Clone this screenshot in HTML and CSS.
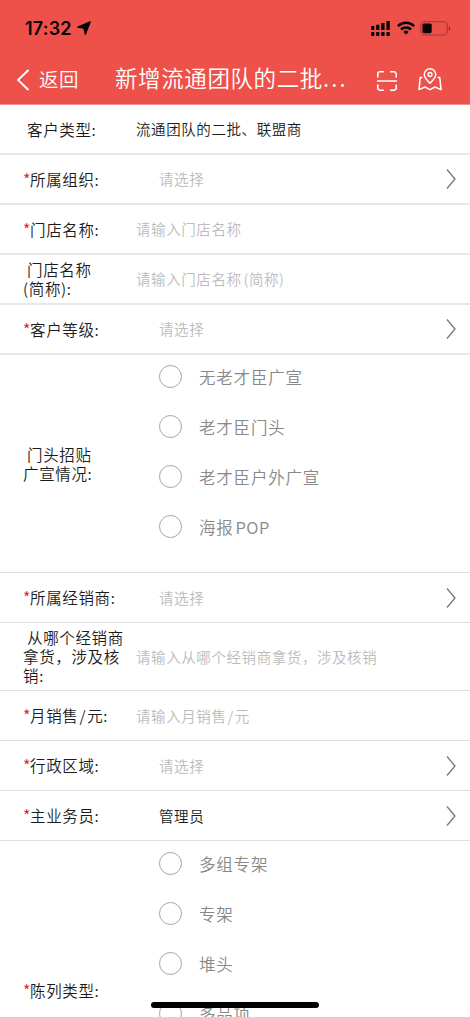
FILE: index.html
```html
<!DOCTYPE html>
<html lang="zh-CN">
<head>
<meta charset="utf-8">
<title>新增客户</title>
<link rel="stylesheet" href="styles.css">
</head>
<body>
<div class="screen">
<header class="header">
  <div class="status">
    <span class="time">17:32</span>
    <svg class="loc" width="14" height="14" viewBox="0 0 14 14"><path d="M13.2.8 8.400 13.300 7 7.200.8 6.100Z" fill="#080506" stroke="#080506" stroke-width="1.300" stroke-linejoin="round"/></svg>
    <svg class="signal" width="19" height="15" viewBox="0 0 19 15" fill="#080506"><rect x="0" y="5" width="3.4" height="4" rx=".6"/><rect x="5" y="3.8" width="3.4" height="5.2" rx=".6"/><rect x="10.2" y="2" width="3.4" height="7" rx=".6"/><rect x="15.4" y="0" width="3.4" height="9" rx=".6"/><rect x="0" y="11" width="3.4" height="4" rx=".8"/><rect x="5" y="11" width="3.4" height="4" rx=".8"/><rect x="10.2" y="11" width="3.4" height="4" rx=".8"/><rect x="15.4" y="11" width="3.4" height="4" rx=".8"/></svg>
    <svg class="wifi" width="18" height="14" viewBox="0 0 18 14" fill="none" stroke="#080506" stroke-width="2.5"><path d="M.9 5.2a11.5 11.5 0 0 1 16.2 0"/><path d="M4 8.5a7.1 7.1 0 0 1 10 0"/><path d="M6.3 10.9a3.9 3.9 0 0 1 5.4 0L9 13.6Z" fill="#080506" stroke="none"/></svg>
    <svg class="battery" width="31" height="15" viewBox="0 0 31 15"><rect x=".8" y=".8" width="26.5" height="13.2" rx="3.6" fill="none" stroke="#a3393a" stroke-width="1.1"/><rect x="2.5" y="2.6" width="9.2" height="9.6" rx="1.6" fill="#080506"/><path d="M28.8 5v5q1.6-.8 1.6-2.5T28.8 5Z" fill="#8c3031"/></svg>
  </div>
  <div class="nav">
    <svg class="back" width="14" height="22" viewBox="0 0 14 22" fill="none" stroke="#fff" stroke-width="1.8"><path d="M12.5 1 2 11l10.500 10"/></svg>
    <span class="back-text">返回</span>
    <h1 class="title">新增流通团队的二批<span class="dots">...</span></h1>
    <svg class="scan" width="20" height="20" viewBox="0 0 20 20" fill="none" stroke="#fff" stroke-width="1.6"><path d="M.8 6.500V3A2.200 2.200 0 0 1 3 .8h4M13 .8h4A2.200 2.200 0 0 1 19.200 3v3.500M.8 13.500V17A2.200 2.200 0 0 0 3 19.200h4M13 19.200h4A2.200 2.200 0 0 0 19.200 17v-3.500M0 10h20"/></svg>
    <svg class="map" width="24" height="23" viewBox="0 0 24 23" fill="none" stroke="#fff" stroke-width="1.5" stroke-linejoin="round"><path d="M12 15.300C8.800 11.900 6.300 9.600 6.300 6.400a5.700 5.600 0 0 1 11.400 0c0 3.200-2.500 5.500-5.700 8.900Z"/><circle cx="12" cy="6.500" r="1.900"/><path d="M4.500 9.600H2.200L1 21.600l6-2.600 5 2.600 5-2.600 6 2.600-1.200-12h-2.300"/></svg>
  </div>
</header>
<main class="form">
  <div class="row"><div class="label"><i class="gap"></i>客户类型:</div><div class="value">流通团队的二批、联盟商</div></div>
  <div class="row"><div class="label"><b class="star">*</b>所属组织:</div><div class="value pick hint">请选择</div><svg class="chev" width="10" height="20" viewBox="0 0 10 20"><path d="M1 .5 9 10 1 19.500"/></svg></div>
  <div class="row"><div class="label"><b class="star">*</b>门店名称:</div><div class="value hint">请输入门店名称</div></div>
  <div class="row"><div class="label"><i class="gap"></i>门店名称<br>(简称):</div><div class="value hint">请输入门店名称<span class="paren">(简称)</span></div></div>
  <div class="row"><div class="label"><b class="star">*</b>客户等级:</div><div class="value pick hint">请选择</div><svg class="chev" width="10" height="20" viewBox="0 0 10 20"><path d="M1 .5 9 10 1 19.500"/></svg></div>
  <div class="row thin group">
    <div class="label"><i class="gap"></i>门头招贴<br>广宣情况:</div>
    <div class="options">
      <div class="option"><span class="radio"></span><span class="choice">无老才臣广宣</span></div>
      <div class="option"><span class="radio"></span><span class="choice">老才臣门头</span></div>
      <div class="option"><span class="radio"></span><span class="choice">老才臣户外广宣</span></div>
      <div class="option"><span class="radio"></span><span class="choice">海报<span class="latin">POP</span></span></div>
    </div>
  </div>
  <div class="row thin"><div class="label"><b class="star">*</b>所属经销商:</div><div class="value pick hint">请选择</div><svg class="chev" width="10" height="20" viewBox="0 0 10 20"><path d="M1 .5 9 10 1 19.500"/></svg></div>
  <div class="row thin tall"><div class="label"><i class="gap"></i>从哪个经销商<br>拿货，涉及核<br>销:</div><div class="value hint">请输入从哪个经销商拿货，涉及核销</div></div>
  <div class="row thin"><div class="label"><b class="star">*</b>月销售<span class="slash">/</span>元:</div><div class="value hint">请输入月销售<span class="slash">/</span>元</div></div>
  <div class="row thin"><div class="label"><b class="star">*</b>行政区域:</div><div class="value pick hint">请选择</div><svg class="chev" width="10" height="20" viewBox="0 0 10 20"><path d="M1 .5 9 10 1 19.500"/></svg></div>
  <div class="row thin"><div class="label"><b class="star">*</b>主业务员:</div><div class="value pick">管理员</div><svg class="chev" width="10" height="20" viewBox="0 0 10 20"><path d="M1 .5 9 10 1 19.500"/></svg></div>
  <div class="row thin display">
    <div class="label"><b class="star">*</b>陈列类型:</div>
    <div class="options">
      <div class="option"><span class="radio"></span><span class="choice">多组专架</span></div>
      <div class="option"><span class="radio"></span><span class="choice">专架</span></div>
      <div class="option"><span class="radio"></span><span class="choice">堆头</span></div>
      <div class="option"><span class="radio"></span><span class="choice">多品项</span></div>
    </div>
  </div>
</main>
<div class="home-bar"></div>
</div>
</body>
</html>
```
FILE: styles.css
```css
* { box-sizing: border-box; }
body { margin: 0; background: #fff; font-family: "Noto Sans CJK SC", sans-serif; font-weight: 350; }
.screen { position: relative; width: 470px; height: 1017px; overflow: hidden; }
.header { height: 105px; background: #ed514a; border-bottom: 1px solid #f4908b; }
.status { display: flex; align-items: center; height: 56px; padding: 0 19px 0 25px; }
.time { width: 47px; margin-top: 1px; font: 600 18px/22px Inter, sans-serif; letter-spacing: 0.2px; color: #080506; white-space: nowrap; }
.loc { margin-left: 5px; }
.signal { margin-left: auto; }
.wifi { margin-left: 7px; }
.battery { margin-left: 5px; }
.nav { display: flex; align-items: center; height: 47px; padding-left: 16px; color: #fff; }
.back { flex: none; }
.back-text { flex: none; width: 76px; margin: -1px 0 0 9px; font-size: 19.5px; letter-spacing: .4px; line-height: 28px; }
.title { display: flex; flex: none; width: 235px; margin: -6px 0 0; font-size: 22.5px; font-weight: 350; letter-spacing: .6px; line-height: 32px; white-space: nowrap; }
.dots { letter-spacing: 2.2px; }
.scan { flex: none; margin: 3px 0 0 27px; }
.map { flex: none; margin: 0 0 0 21px; }
.row { display: flex; align-items: center; height: 50px; padding: 0 14px 0 23px; border-bottom: 2px solid #e8e8e8; }
.thin { border-bottom: 1px solid #dfdfdf; }
.label { flex: none; width: 113px; font-size: 15.5px; line-height: 19px; letter-spacing: .65px; color: #1c1c1c; white-space: nowrap; }
.star { display: inline-block; width: 7px; font-weight: 400; font-size: 16px; letter-spacing: 0; line-height: 16px; color: #e02a22; }
.gap { display: inline-block; width: 4px; }
.value { flex: 1; font-size: 14.5px; letter-spacing: .58px; line-height: 22px; color: #1c1c1c; white-space: nowrap; }
.pick { padding-left: 23px; }
.hint { color: #bcbcbc; }
.paren { margin-left: 2px; }
.slash { margin: 0 1px; }
.chev { flex: none; fill: none; stroke: #777; stroke-width: 1.3; }
.group { height: 218px; }
.tall { height: 68px; }
.options { align-self: flex-start; padding: 0 0 0 23px; }
.group .options { margin-top: -4px; }
.display .options { margin-top: -3px; }
.option { display: flex; align-items: center; height: 50px; font-size: 16.5px; letter-spacing: .8px; color: #888; }
.choice { padding-top: 2px; }
.radio { width: 23px; height: 23px; margin-right: 17px; border: 1.5px solid #a5a5a5; border-radius: 50%; }
.latin { margin-left: 2px; letter-spacing: .4px; }
.display { height: 300px; }
.home-bar { position: absolute; left: 151px; top: 1002px; width: 168px; height: 6px; border-radius: 3px; background: #000; }
```
